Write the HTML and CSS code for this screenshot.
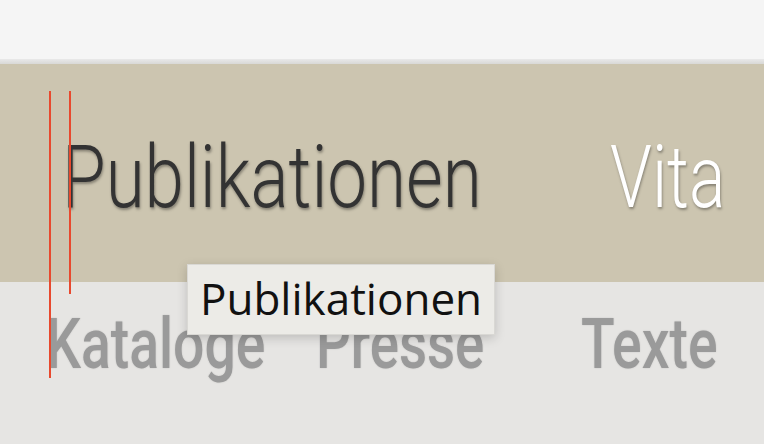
FILE: index.html
```html
<!DOCTYPE html>
<html lang="de">
<head>
    <meta charset="UTF-8">
    <meta name="viewport" content="width=device-width, initial-scale=1.0">
    <title>Publikationen</title>
    <link rel="stylesheet" href="styles.css">
</head>
<body>
    <div class="topbar"></div>
    <div class="rule"></div>

    <nav class="main-nav">
        <a class="main-link current" href="#">Publikationen</a>
        <a class="main-link light" href="#">Vita</a>
    </nav>

    <nav class="sub-nav">
        <a class="sub-link" href="#">Kataloge</a>
        <a class="sub-link" href="#">Presse</a>
        <a class="sub-link" href="#">Texte</a>
    </nav>

    <!-- Hilfslinien -->
    <div class="guide guide-outer"></div>
    <div class="guide guide-inner"></div>

    <div class="tooltip">Publikationen</div>
</body>
</html>
```

FILE: styles.css
```css
/* Grundlayout */
body, html {
    margin: 0;
    height: 100%;
    overflow: hidden;
    background-color: #e6e5e3;
    font-family: Roboto, "Liberation Sans", sans-serif;
}

body {
    position: relative;
}

a {
    text-decoration: none;
}

.topbar {
    height: 59px;
    background-color: #f5f5f5;
}

.rule {
    height: 5px;
    background: linear-gradient(#e9e9e9, #d8d8d6);
}

/* Hauptnavigation */
.main-nav {
    height: 148px;
    padding: 70px 0 0 62px;
    background-color: #ccc5b0;
    display: grid;
    grid-template-columns: 548px auto;
}

.main-link {
    display: inline-block;
    font-size: 87px;
    font-weight: 300;
    line-height: 87px;
    transform: scaleX(0.815);
    transform-origin: left;
    white-space: nowrap;
    color: #333333;
    text-shadow: 1px 2px 3px rgba(0, 0, 0, 0.35);
}

.main-link.light {
    color: #ffffff;
    transform: scaleX(0.78);
}

/* Unternavigation */
.sub-nav {
    padding: 27px 0 0 46px;
    display: grid;
    grid-template-columns: 270px 265px auto;
}

.sub-link {
    display: inline-block;
    font-size: 70px;
    font-weight: 500;
    line-height: 70px;
    transform: scaleX(0.79);
    transform-origin: left;
    white-space: nowrap;
    color: #9a9a9a;
    text-shadow: 0 0 2px rgba(0, 0, 0, 0.15);
}

.sub-link:nth-child(2) {
    transform: scaleX(0.78);
}

/* Hilfslinien */
.guide {
    position: absolute;
    top: 91px;
    width: 2px;
    background-color: #e8492e;
}

.guide-outer {
    left: 49px;
    height: 287px;
}

.guide-inner {
    left: 69px;
    height: 203px;
}

/* Tooltip */
.tooltip {
    position: absolute;
    left: 187px;
    top: 264px;
    height: 69px;
    padding: 0 12px;
    border: 1px solid #d9d8d4;
    background-color: #ecebe7;
    box-shadow: 0 3px 10px rgba(0, 0, 0, 0.18);
    font-family: "Open Sans", sans-serif;
    font-size: 44px;
    line-height: 67px;
    color: #111111;
}
```
